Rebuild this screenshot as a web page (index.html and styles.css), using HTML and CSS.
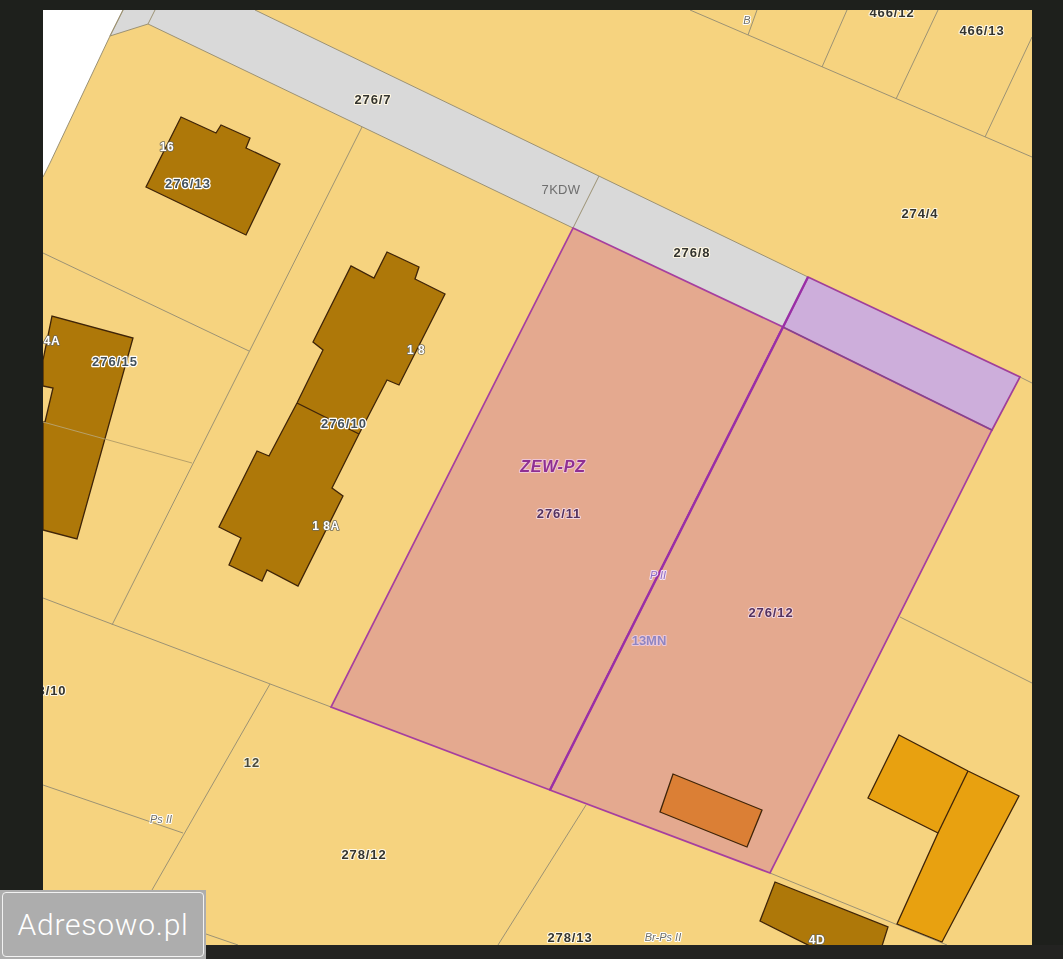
FILE: index.html
```html
<!DOCTYPE html>
<html lang="pl">
<head>
<meta charset="utf-8">
<title>Adresowo.pl</title>
<link rel="stylesheet" href="styles.css">
</head>
<body>
<main class="page">
  <svg class="map" viewBox="43 10 989 935" xmlns="http://www.w3.org/2000/svg" role="img" aria-label="Mapa działek">
    <rect class="ground" x="43" y="10" width="989" height="935"/>
    <polygon class="blank" points="43,10 123,10 110,36 50,163 43,177"/>
    <polygon class="road" points="123,10 255,10 808,277 783,327 573,228 148,24 110,36"/>

    <g class="parcel-lines">
      <polyline points="123,10 110,36 148,24 573,228"/>
      <line x1="255" y1="10" x2="808" y2="277"/>
      <line x1="155" y1="10" x2="148" y2="24"/>
      <line x1="599" y1="176" x2="573" y2="228"/>
      <polyline points="123,10 110,36 50,163 43,177"/>
      <line x1="690" y1="10" x2="1032" y2="157"/>
      <line x1="748" y1="35" x2="757" y2="10"/>
      <line x1="822" y1="67" x2="847" y2="10"/>
      <line x1="896" y1="99" x2="938" y2="10"/>
      <line x1="985" y1="137" x2="1032" y2="37"/>
      <line x1="362" y1="127" x2="112" y2="625"/>
      <line x1="43" y1="253" x2="249" y2="351"/>
      <line x1="43" y1="598" x2="331" y2="707"/>
      <line x1="270" y1="684" x2="152" y2="890"/>
      <line x1="43" y1="785" x2="183" y2="833"/>
      <line x1="206" y1="934" x2="238" y2="945"/>
      <line x1="586" y1="805" x2="498" y2="945"/>
      <line x1="900" y1="617" x2="1032" y2="683"/>
      <line x1="770" y1="873" x2="947" y2="945"/>
      <line x1="1020" y1="377" x2="1032" y2="383"/>
    </g>

    <polygon class="plot" points="573,228 783,327 550,790 331,707"/>
    <polygon class="plot" points="783,327 992,430 770,873 550,790"/>
    <polygon class="zone" points="808,277 1020,377 992,430 783,327"/>
    <line class="zone-dash" x1="783" y1="327" x2="992" y2="430"/>
    <line class="plot-split" x1="783" y1="327" x2="550" y2="790"/>
    <line class="plot-split" x1="808" y1="277" x2="783" y2="327"/>

    <g class="building brown">
      <polygon points="181,117 216,133 221,125 250,138 246,148 280,164 246,235 146,187"/>
      <polygon points="387,252 419,267 415,279 445,294 399,385 387,380 359,434 332,488 343,496 298,586 267,570 262,581 229,565 241,538 219,527 257,451 269,456 297,403 323,350 313,342 351,266 374,278"/>
      <line x1="297" y1="403" x2="359" y2="434"/>
      <polygon points="43,360 52,316 133,338 77,539 43,530 43,422 45,422 53,388 43,386"/>
      <polygon points="775,882 888,927 882,946 810,946 760,921"/>
    </g>
    <polygon class="building orange" points="673,774 762,810 747,847 660,812"/>
    <g class="building gold">
      <polygon points="899,735 968,771 1019,796 942,942 897,924 938,833 868,798"/>
      <line x1="968" y1="771" x2="938" y2="833"/>
    </g>
    <line class="over-line" x1="43" y1="422" x2="192" y2="463"/>

    <g class="labels">
      <text class="num" x="373" y="104">276/7</text>
      <text class="road-code" x="561" y="194">7KDW</text>
      <text class="num" x="692" y="257">276/8</text>
      <text class="num" x="920" y="218">274/4</text>
      <text class="num" x="982" y="35">466/13</text>
      <text class="num" x="892" y="17">466/12</text>
      <text class="use" x="747" y="24">B</text>
      <text class="bnum small" x="167" y="151">16</text>
      <text class="bnum" x="188" y="188">276/13</text>
      <text class="bnum" x="115" y="366">276/15</text>
      <text class="bnum small" x="52" y="345">4A</text>
      <text class="bnum small" x="416" y="354">1 8</text>
      <text class="bnum" x="344" y="428">276/10</text>
      <text class="bnum small" x="326" y="530">1 8A</text>
      <text class="zew" x="553" y="472">ZEW-PZ</text>
      <text class="plotnum" x="559" y="518">276/11</text>
      <text class="plotnum" x="771" y="617">276/12</text>
      <text class="use violet" x="658" y="579">P II</text>
      <text class="mn" x="649" y="645">13MN</text>
      <text class="num" x="52" y="695">3/10</text>
      <text class="num hollow" x="252" y="767">12</text>
      <text class="use" x="161" y="823">Ps II</text>
      <text class="num" x="364" y="859">278/12</text>
      <text class="num" x="570" y="942">278/13</text>
      <text class="use" x="663" y="941">Br-Ps II</text>
      <text class="bnum small" x="817" y="944">4D</text>
    </g>
  </svg>
  <div class="mark"><span class="mark-text">Adresowo.pl</span></div>
</main>
</body>
</html>
```

FILE: styles.css
```css
html, body {
  margin: 0;
  height: 100%;
  background: #1e201c;
  overflow: hidden;
}

.page {
  position: relative;
  box-sizing: border-box;
  height: 959px;
  padding: 10px 31px 14px 43px;
  background: linear-gradient(#1e201c 945px, #232321 945px);
}

.map {
  display: block;
  width: 989px;
  height: 935px;
  filter: blur(0.4px);
}

.ground { fill: #f6d37f; }
.blank { fill: #ffffff; }
.road { fill: #d9d9d9; }

.parcel-lines line,
.parcel-lines polyline {
  fill: none;
  stroke: #9c9274;
  stroke-width: 1;
}

.over-line {
  stroke: #b7a069;
  stroke-width: 1;
}

.plot {
  fill: #e4a98f;
  stroke: #a63f9f;
  stroke-width: 1.7;
  stroke-linejoin: miter;
}

.zone {
  fill: #cdaedb;
  stroke: #a03f9a;
  stroke-width: 1.7;
}

.zone-dash {
  stroke: #7d4a86;
  stroke-width: 1;
}

.plot-split {
  stroke: #9a2fa6;
  stroke-width: 2.4;
}

.building polygon,
.building line,
.building.orange {
  stroke: #3f2408;
  stroke-width: 1.3;
  stroke-linejoin: miter;
}

.brown polygon { fill: #ae7809; }
.gold polygon { fill: #e8a110; }
.building.orange { fill: #db7f35; }

.labels text {
  font-family: "Liberation Sans", Arial, sans-serif;
  text-anchor: middle;
  paint-order: stroke;
  stroke-linejoin: round;
}

.num {
  font-size: 13px;
  font-weight: 700;
  letter-spacing: 0.9px;
  fill: #34342f;
  stroke: #fff8e4;
  stroke-width: 2.2px;
}

.num.hollow {
  fill: #4a4a3c;
  stroke: #f9f3dc;
}

.bnum {
  font-size: 13px;
  font-weight: 700;
  letter-spacing: 1px;
  fill: #43505a;
  stroke: #ffffff;
  stroke-width: 2.4px;
}

.bnum.small {
  font-size: 12px;
  letter-spacing: 0.5px;
  fill: #ffffff;
  stroke: #6f6a58;
  stroke-width: 1.6px;
}

.road-code {
  font-size: 13px;
  letter-spacing: 0.3px;
  fill: #6f6f6f;
}

.use {
  font-size: 11px;
  font-style: italic;
  fill: #70706a;
  stroke: #ffffff;
  stroke-width: 2px;
}

.use.violet {
  fill: #8f6cc0;
  stroke: #f3dff5;
}

.zew {
  font-size: 16px;
  font-weight: 700;
  font-style: italic;
  letter-spacing: 0.8px;
  fill: #8f2f92;
  stroke: #eec5d4;
  stroke-width: 2px;
}

.plotnum {
  font-size: 13px;
  font-weight: 700;
  letter-spacing: 0.9px;
  fill: #54325f;
  stroke: #f3d6dd;
  stroke-width: 2px;
}

.mn {
  font-size: 13px;
  font-weight: 700;
  fill: #8f86c2;
  stroke: #ecc8d8;
  stroke-width: 2px;
}

.mark {
  position: absolute;
  left: 0;
  top: 890px;
  box-sizing: border-box;
  width: 206px;
  height: 69px;
  padding: 2px;
  background: #adadad;
}

.mark-text {
  display: flex;
  align-items: center;
  justify-content: center;
  box-sizing: border-box;
  height: 100%;
  border: 1.5px solid #f2f2f2;
  border-radius: 4px;
  background: #adadad;
  color: #ffffff;
  font-family: Roboto, "Liberation Sans", sans-serif;
  font-weight: 300;
  font-size: 30px;
  letter-spacing: 0.75px;
}
```
